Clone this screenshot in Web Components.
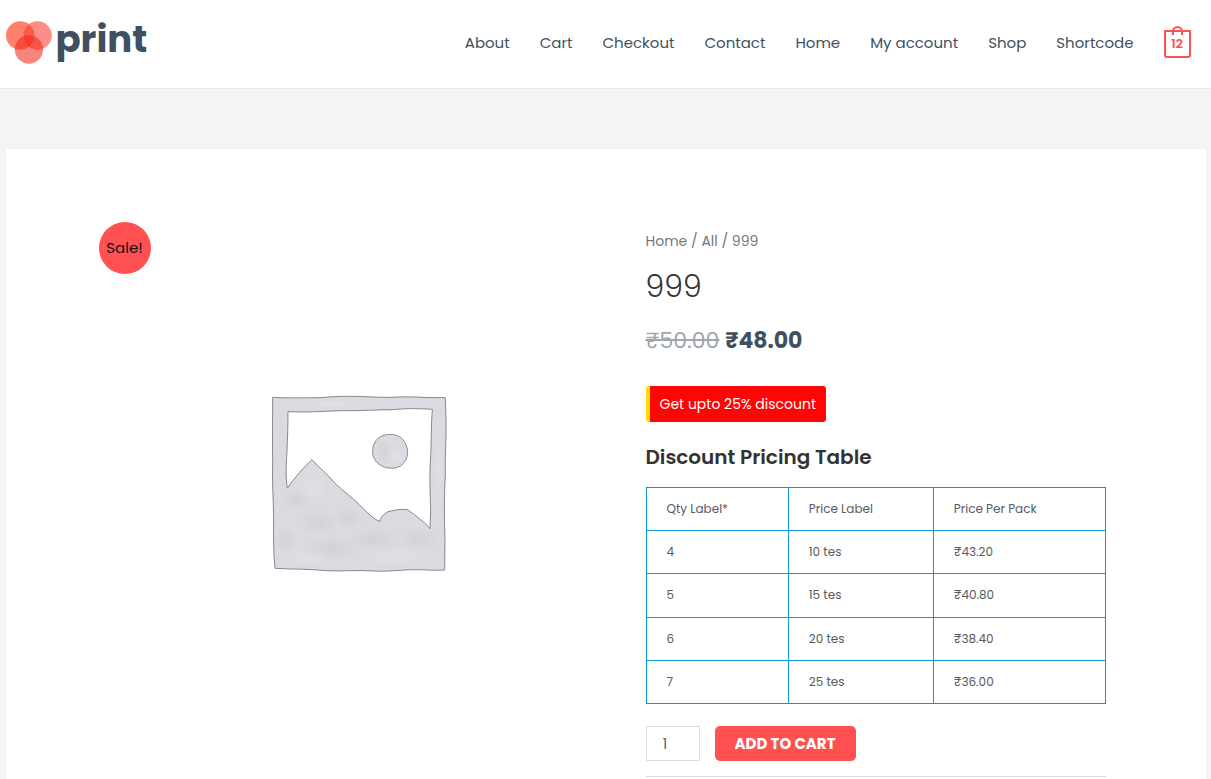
<!DOCTYPE html>
<html lang="en">
<head>
<meta charset="utf-8">
<meta name="viewport" content="width=device-width, initial-scale=1">
<title>999 – print</title>
<style>
body { margin: 0; background: #f4f4f4; color: #3f5061; font: 15px/24px Poppins, Inter, sans-serif; }
</style>
</head>
<body>
<shop-page>
  <site-header slot="header">
    <nav-link href="#about">About</nav-link>
    <nav-link href="#cart">Cart</nav-link>
    <nav-link href="#checkout">Checkout</nav-link>
    <nav-link href="#contact">Contact</nav-link>
    <nav-link href="#home">Home</nav-link>
    <nav-link href="#account">My account</nav-link>
    <nav-link href="#shop">Shop</nav-link>
    <nav-link href="#shortcode">Shortcode</nav-link>
    <cart-link>12</cart-link>
  </site-header>
  <product-view>
    <product-gallery slot="gallery">Sale!</product-gallery>
    <bread-crumb></bread-crumb>
    <product-title>999</product-title>
    <product-price><span slot="old">₹50.00</span>₹48.00</product-price>
    <discount-note>Get upto 25% discount</discount-note>
    <pricing-table></pricing-table>
    <cart-form></cart-form>
  </product-view>
</shop-page>
<script>
const define = (name, html) => {
  const template = document.createElement('template');
  template.innerHTML = html;
  customElements.define(name, class extends HTMLElement {
    constructor() {
      super();
      this.attachShadow({ mode: 'open' }).append(template.content.cloneNode(true));
    }
    connectedCallback() {
      const link = this.shadowRoot.querySelector('a');
      if (link && this.hasAttribute('href')) link.href = this.getAttribute('href');
    }
  });
};

define('shop-page', `
<style>
:host { display: flex; flex-direction: column; min-height: 100vh; }
main { flex: 1; display: flex; flex-direction: column; box-sizing: border-box; width: 100%; max-width: 1200px; margin: 0 auto; padding-top: 60px; }
</style>
<slot name="header"></slot><main><slot></slot></main>`);

define('site-header', `
<style>
:host { display: block; background: #fff; border-bottom: 1px solid #e6e6e6; }
header { display: flex; align-items: center; justify-content: space-between; box-sizing: border-box; max-width: 1200px; height: 88px; margin: 0 auto; padding: 0 15px 3px 0; }
nav { display: flex; align-items: center; gap: 30px; }
</style>
<header><site-logo></site-logo><nav aria-label="Primary"><slot></slot></nav></header>`);

define('site-logo', `
<style>
:host { display: block; }
a { display: flex; align-items: center; gap: 4px; color: #3f5061; text-decoration: none; font-size: 37px; font-weight: 700; line-height: 44px; }
span { padding-bottom: 8px; }
</style>
<a href="#home"><svg width="46" height="43" viewBox="0 0 46 43" aria-hidden="true">
<circle cx="14.2" cy="14.5" r="14.2" fill="#ff3a1e" fill-opacity=".65"/>
<circle cx="31.6" cy="14.5" r="14.2" fill="#fb3b30" fill-opacity=".58"/>
<circle cx="22.9" cy="28.5" r="14.2" fill="#f02818" fill-opacity=".57"/>
</svg><span>print</span></a>`);

define('nav-link', `
<style>
:host { display: block; }
a { color: #3f5061; text-decoration: none; }
</style>
<a href="#"><slot></slot></a>`);

define('cart-link', `
<style>
:host { display: block; }
a { display: grid; place-items: center; color: #ff5151; text-decoration: none; font-size: 13px; font-weight: 600; line-height: 20px; }
svg, span { grid-area: 1 / 1; }
span { padding-top: 2px; }
</style>
<a href="#cart" aria-label="View cart"><svg width="27" height="34" viewBox="0 1 27 34" fill="none" stroke="#ff5151" stroke-width="2" aria-hidden="true">
<path d="M1 6H26V30Q26 32 24 32H3Q1 32 1 30ZM9 10V6.5A4.5 4.5 0 0 1 18 6.5V10"/>
</svg><span><slot></slot></span></a>`);

define('product-view', `
<style>
:host { flex: 1; display: grid; grid-template-columns: 11fr 10fr; column-gap: 34px; align-items: start; padding: 82px 100px 0; background: #fff; }
section { min-width: 0; }
</style>
<slot name="gallery"></slot><section><slot></slot></section>`);

define('product-gallery', `
<style>
:host { display: block; position: relative; color: #111; }
svg { display: block; width: 100%; height: auto; }
.badge { position: absolute; top: -9px; left: -7px; display: grid; place-items: center; width: 52px; height: 52px; border-radius: 50%; background: #ff5151; }
</style>
<svg viewBox="0 0 506 506" role="img" aria-label="Awaiting product image">
<defs>
<radialGradient id="d"><stop offset="0" stop-color="#c9cbd1" stop-opacity=".55"/><stop offset="1" stop-color="#c9cbd1" stop-opacity="0"/></radialGradient>
<radialGradient id="l"><stop offset="0" stop-color="#e3e4e8" stop-opacity=".6"/><stop offset="1" stop-color="#e3e4e8" stop-opacity="0"/></radialGradient>
</defs>
<g transform="translate(154 154) scale(.33333)">
<path fill="#dadbe0" fill-rule="evenodd" stroke="#77787c" stroke-width="2.6" stroke-linejoin="round" d="M38 37C100 40 140 38 180 38C240 32 290 34 340 36C390 39 420 34 470 36C500 39 530 37 556 38L558 100C560 160 554 210 556 270C552 340 553 400 555 460L554 555C520 558 490 553 455 554C410 556 380 560 340 558C290 554 250 560 200 557C150 552 100 553 45 550C40 500 40 450 41 400C40 340 36 290 38 230C37 170 38 100 38 37ZM84 80C150 83 200 78 250 77C300 78 350 74 400 74C445 69 485 71 517 73C512 130 515 180 511 230C508 290 511 330 512 380L510 431C495 411 470 395 443 374C420 371 400 376 384 380C370 388 361 397 360 409C340 403 325 385 308 369C285 344 245 315 220 290C200 263 175 247 156 224C130 248 104 278 82 309C77 280 78 240 81 200C83 150 84 120 84 80Z"/>
<path fill="#dadbe0" stroke="#77787c" stroke-width="2.6" d="M362 155C379 146 403 146 419 155C434 166 442 182 443 203C442 220 434 235 420 244C403 253 380 251 362 241C346 231 338 218 338 200C338 180 346 163 362 155Z"/>
<g fill="url(#d)">
<ellipse cx="175" cy="412" rx="60" ry="40"/><ellipse cx="265" cy="398" rx="45" ry="34"/><ellipse cx="215" cy="490" rx="85" ry="36"/><ellipse cx="75" cy="465" rx="34" ry="38"/><ellipse cx="345" cy="465" rx="80" ry="34"/><ellipse cx="475" cy="462" rx="60" ry="34"/><ellipse cx="108" cy="345" rx="48" ry="34"/><ellipse cx="370" cy="195" rx="24" ry="34"/>
</g>
<g fill="url(#l)">
<ellipse cx="140" cy="520" rx="80" ry="28"/><ellipse cx="160" cy="310" rx="44" ry="60"/><ellipse cx="400" cy="515" rx="110" ry="30"/><ellipse cx="215" cy="55" rx="90" ry="14"/><ellipse cx="535" cy="250" rx="14" ry="100"/><ellipse cx="410" cy="215" rx="24" ry="28"/>
</g>
</g>
</svg>
<span class="badge"><slot></slot></span>`);

define('bread-crumb', `
<style>
:host { display: block; color: #777; font-size: 14px; line-height: 20px; }
a { color: inherit; text-decoration: none; }
</style>
<nav aria-label="Breadcrumb"><a href="#home">Home</a> / <a href="#all">All</a> / 999</nav>`);

define('product-title', `
<style>
:host { display: block; color: #333; }
h1 { margin: 16px 0 0; font-size: 30px; font-weight: 300; line-height: 40px; }
</style>
<h1><slot></slot></h1>`);

define('product-price', `
<style>
:host { display: block; margin-top: 18px; font-size: 22px; line-height: 32px; }
del { opacity: .5; }
ins { font-weight: 700; text-decoration: none; }
</style>
<del><slot name="old"></slot></del> <ins><slot></slot></ins>`);

define('discount-note', `
<style>
:host { display: block; margin-top: 29px; }
p { width: fit-content; margin: 0; padding: 6px 10px; border-left: 4px solid #fd0; border-radius: 3px; background: #ff0505; color: #fff; font-size: 14px; }
</style>
<p><slot></slot></p>`);

define('pricing-table', `
<style>
:host { display: block; }
h2 { margin: 20px 0 15px; color: #333; font-size: 20px; font-weight: 600; line-height: 30px; }
table { width: 100%; height: 217px; border-collapse: collapse; table-layout: fixed; font-size: 12px; line-height: 20px; }
th, td { box-sizing: border-box; height: 43px; padding: 0 20px; border: 1px solid #0e96d8; color: #555b60; font-weight: 400; text-align: left; }
.qty { width: 31%; }
.label { width: 145px; }
</style>
<h2 id="t">Discount Pricing Table</h2>
<table aria-labelledby="t">
<thead><tr><th class="qty" scope="col">Qty Label*</th><th class="label" scope="col">Price Label</th><th scope="col">Price Per Pack</th></tr></thead>
<tbody>
<tr><td>4</td><td>10 tes</td><td>₹43.20</td></tr>
<tr><td>5</td><td>15 tes</td><td>₹40.80</td></tr>
<tr><td>6</td><td>20 tes</td><td>₹38.40</td></tr>
<tr><td>7</td><td>25 tes</td><td>₹36.00</td></tr>
</tbody>
</table>`);

define('cart-form', `
<style>
:host { display: block; margin-top: 22px; padding-bottom: 15px; border-bottom: 1px solid #ddd; }
form { display: flex; gap: 15px; }
input { box-sizing: border-box; width: 54px; height: 35px; margin: 0; padding: 0 16px; border: 1px solid #ddd; background: #fff; color: #666; font: inherit; appearance: textfield; }
input::-webkit-inner-spin-button { appearance: none; margin: 0; }
button { height: 35px; padding: 0 20px; border: 0; border-radius: 5px; background: #ff5151; color: #fff; font: inherit; font-weight: 700; }
</style>
<form><input type="number" min="1" value="1" aria-label="Quantity"><button type="button">ADD TO CART</button></form>`);
</script>
</body>
</html>
